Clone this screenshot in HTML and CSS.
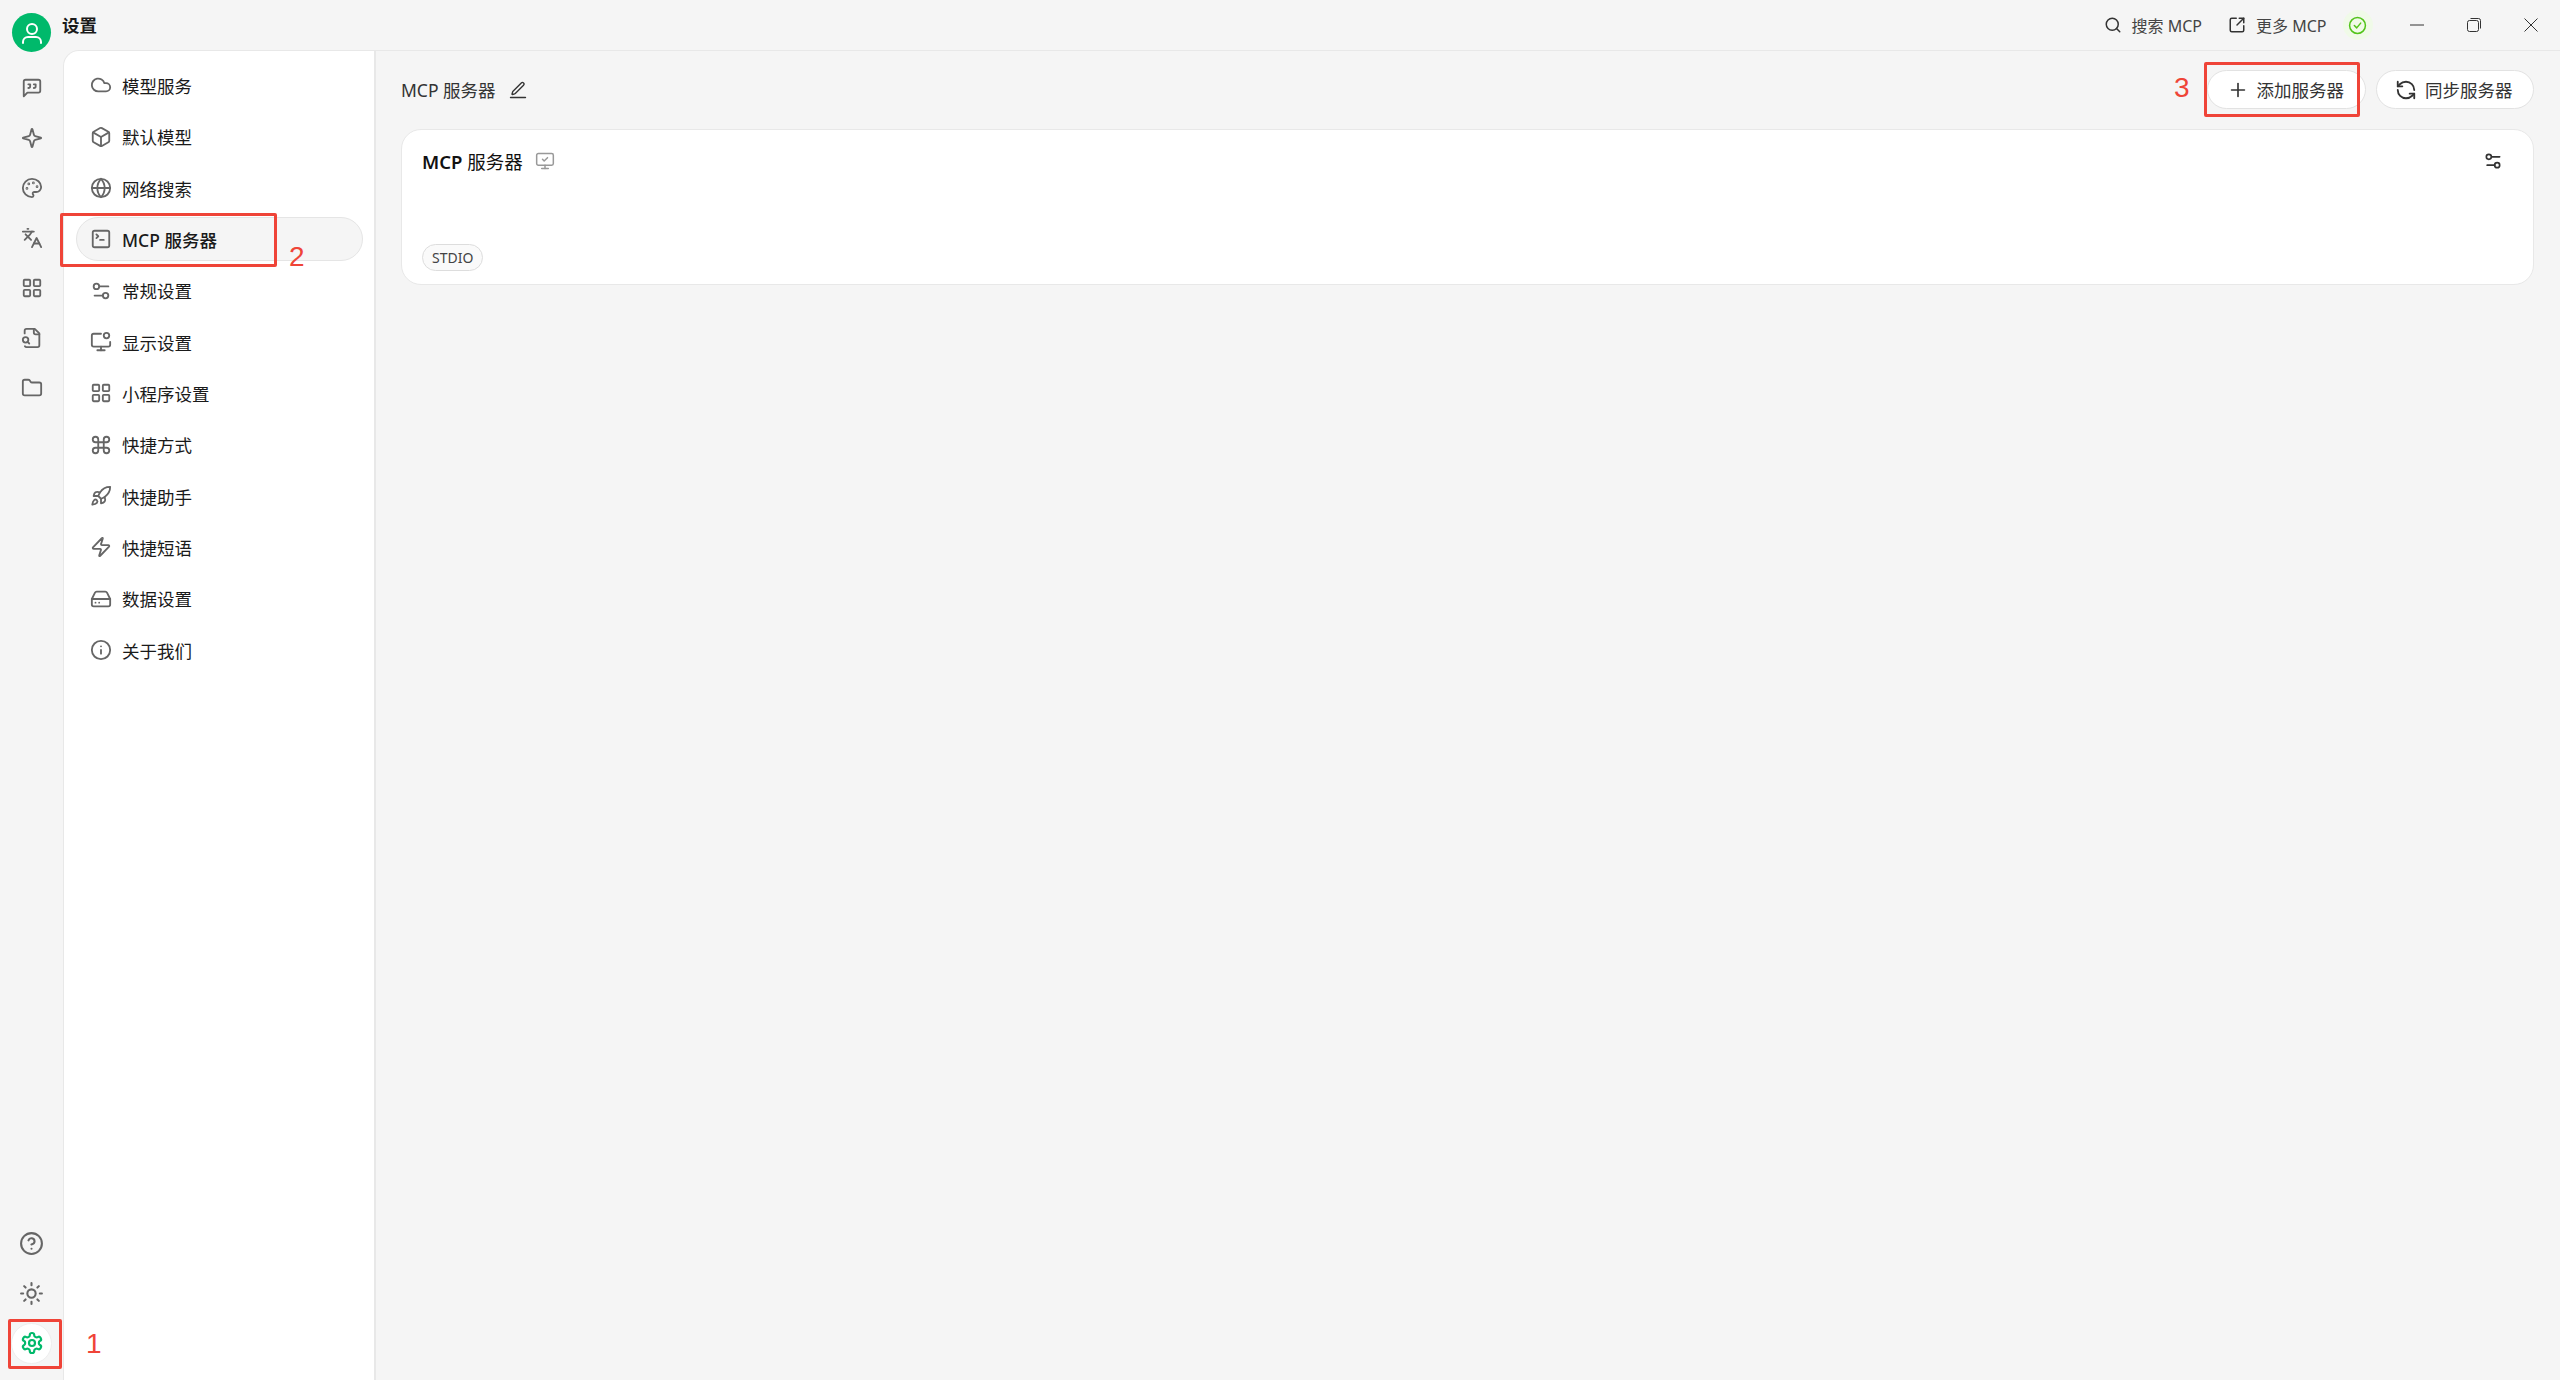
FILE: index.html
```html
<!DOCTYPE html>
<html lang="zh-CN">
<head>
<meta charset="utf-8">
<title>设置</title>
<link rel="stylesheet" href="styles.css">
</head>
<body>
<svg class="sprite" aria-hidden="true">
  <symbol id="i-user" viewBox="0 0 24 24"><circle cx="12" cy="8" r="5"/><path d="M3 22v-1a5 5 0 0 1 5-5h8a5 5 0 0 1 5 5v1"/></symbol>
  <symbol id="i-quote" viewBox="0 0 24 24"><path d="M21 15a2 2 0 0 1-2 2H7l-4 4V5a2 2 0 0 1 2-2h14a2 2 0 0 1 2 2z"/><path d="M8 12a2 2 0 0 0 2-2V8H8"/><path d="M14 12a2 2 0 0 0 2-2V8h-2"/></symbol>
  <symbol id="i-sparkle" viewBox="0 0 24 24"><path d="M9.937 15.5A2 2 0 0 0 8.5 14.063l-6.135-1.582a.5.5 0 0 1 0-.962L8.5 9.936A2 2 0 0 0 9.937 8.5l1.582-6.135a.5.5 0 0 1 .963 0L14.063 8.5A2 2 0 0 0 15.5 9.937l6.135 1.581a.5.5 0 0 1 0 .964L15.5 14.063a2 2 0 0 0-1.437 1.437l-1.582 6.135a.5.5 0 0 1-.963 0z"/></symbol>
  <symbol id="i-palette" viewBox="0 0 24 24"><circle cx="13.5" cy="6.5" r=".5"/><circle cx="17.5" cy="10.5" r=".5"/><circle cx="8.5" cy="7.5" r=".5"/><circle cx="6.5" cy="12.5" r=".5"/><path d="M12 2C6.5 2 2 6.5 2 12s4.5 10 10 10c.926 0 1.648-.746 1.648-1.688 0-.437-.18-.835-.437-1.125-.29-.289-.438-.652-.438-1.125a1.64 1.64 0 0 1 1.668-1.668h1.996c3.051 0 5.555-2.503 5.555-5.554C21.965 6.012 17.461 2 12 2z"/></symbol>
  <symbol id="i-lang" viewBox="0 0 24 24"><path d="m5 8 6 6"/><path d="m4 14 6-6 2-3"/><path d="M2 5h12"/><path d="M7 2h1"/><path d="m22 22-5-10-5 10"/><path d="M14 18h6"/></symbol>
  <symbol id="i-grid" viewBox="0 0 24 24"><rect x="3" y="3" width="7" height="7" rx="1"/><rect x="14" y="3" width="7" height="7" rx="1"/><rect x="14" y="14" width="7" height="7" rx="1"/><rect x="3" y="14" width="7" height="7" rx="1"/></symbol>
  <symbol id="i-filesearch" viewBox="0 0 24 24"><path d="M14 2v4a2 2 0 0 0 2 2h4"/><path d="M4.268 21a2 2 0 0 0 1.727 1H18a2 2 0 0 0 2-2V7l-5-5H6a2 2 0 0 0-2 2v3"/><path d="m9 18-1.5-1.5"/><circle cx="5" cy="14" r="3"/></symbol>
  <symbol id="i-folder" viewBox="0 0 24 24"><path d="M20 20a2 2 0 0 0 2-2V8a2 2 0 0 0-2-2h-7.9a2 2 0 0 1-1.69-.9L9.6 3.9A2 2 0 0 0 7.93 3H4a2 2 0 0 0-2 2v13a2 2 0 0 0 2 2Z"/></symbol>
  <symbol id="i-help" viewBox="0 0 24 24"><circle cx="12" cy="12" r="10"/><path d="M9.09 9a3 3 0 0 1 5.83 1c0 2-3 3-3 3"/><path d="M12 17h.01"/></symbol>
  <symbol id="i-sun" viewBox="0 0 24 24"><circle cx="12" cy="12" r="4"/><path d="M12 2v2"/><path d="M12 20v2"/><path d="m4.93 4.93 1.41 1.41"/><path d="m17.66 17.66 1.41 1.41"/><path d="M2 12h2"/><path d="M20 12h2"/><path d="m6.34 17.66-1.41 1.41"/><path d="m19.07 4.93-1.41 1.41"/></symbol>
  <symbol id="i-gear" viewBox="0 0 24 24"><path d="M12.22 2h-.44a2 2 0 0 0-2 2v.18a2 2 0 0 1-1 1.73l-.43.25a2 2 0 0 1-2 0l-.15-.08a2 2 0 0 0-2.73.73l-.22.38a2 2 0 0 0 .73 2.73l.15.1a2 2 0 0 1 1 1.72v.51a2 2 0 0 1-1 1.74l-.15.09a2 2 0 0 0-.73 2.73l.22.38a2 2 0 0 0 2.73.73l.15-.08a2 2 0 0 1 2 0l.43.25a2 2 0 0 1 1 1.73V20a2 2 0 0 0 2 2h.44a2 2 0 0 0 2-2v-.18a2 2 0 0 1 1-1.73l.43-.25a2 2 0 0 1 2 0l.15.08a2 2 0 0 0 2.73-.73l.22-.39a2 2 0 0 0-.73-2.73l-.15-.08a2 2 0 0 1-1-1.74v-.5a2 2 0 0 1 1-1.74l.15-.09a2 2 0 0 0 .73-2.73l-.22-.38a2 2 0 0 0-2.73-.73l-.15.08a2 2 0 0 1-2 0l-.43-.25a2 2 0 0 1-1-1.73V4a2 2 0 0 0-2-2z"/><circle cx="12" cy="12" r="3"/></symbol>
  <symbol id="i-cloud" viewBox="0 0 24 24"><path d="M17.5 19H9a7 7 0 1 1 6.71-9h1.79a4.5 4.5 0 1 1 0 9Z"/></symbol>
  <symbol id="i-box" viewBox="0 0 24 24"><path d="M21 8a2 2 0 0 0-1-1.73l-7-4a2 2 0 0 0-2 0l-7 4A2 2 0 0 0 3 8v8a2 2 0 0 0 1 1.73l7 4a2 2 0 0 0 2 0l7-4A2 2 0 0 0 21 16Z"/><path d="m3.3 7 8.7 5 8.7-5"/><path d="M12 22V12"/></symbol>
  <symbol id="i-globe" viewBox="0 0 24 24"><circle cx="12" cy="12" r="10"/><path d="M12 2a14.5 14.5 0 0 0 0 20 14.5 14.5 0 0 0 0-20"/><path d="M2 12h20"/></symbol>
  <symbol id="i-terminal" viewBox="0 0 24 24"><path d="m7 11 2-2-2-2"/><path d="M11 13h4"/><rect x="3" y="3" width="18" height="18" rx="2"/></symbol>
  <symbol id="i-sliders" viewBox="0 0 24 24"><path d="M20 7h-9"/><path d="M14 17H5"/><circle cx="17" cy="17" r="3"/><circle cx="7" cy="7" r="3"/></symbol>
  <symbol id="i-monitorcog" viewBox="0 0 24 24"><path d="M12 17v4"/><path d="M8 21h8"/><path d="M12 3H4a2 2 0 0 0-2 2v10a2 2 0 0 0 2 2h16a2 2 0 0 0 2-2v-3"/><circle cx="18" cy="5" r="3"/></symbol>
  <symbol id="i-command" viewBox="0 0 24 24"><path d="M15 6v12a3 3 0 1 0 3-3H6a3 3 0 1 0 3 3V6a3 3 0 1 0-3 3h12a3 3 0 1 0-3-3"/></symbol>
  <symbol id="i-rocket" viewBox="0 0 24 24"><path d="M4.5 16.5c-1.5 1.26-2 5-2 5s3.74-.5 5-2c.71-.84.7-2.13-.09-2.91a2.18 2.18 0 0 0-2.91-.09z"/><path d="m12 15-3-3a22 22 0 0 1 2-3.95A12.88 12.88 0 0 1 22 2c0 2.72-.78 7.5-6 11a22.35 22.35 0 0 1-4 2z"/><path d="M9 12H4s.55-3.03 2-4c1.62-1.08 5 0 5 0"/><path d="M12 15v5s3.03-.55 4-2c1.08-1.62 0-5 0-5"/></symbol>
  <symbol id="i-zap" viewBox="0 0 24 24"><path d="M4 14a1 1 0 0 1-.78-1.63l9.9-10.2a.5.5 0 0 1 .86.46l-1.92 6.02A1 1 0 0 0 13 10h7a1 1 0 0 1 .78 1.63l-9.9 10.2a.5.5 0 0 1-.86-.46l1.92-6.02A1 1 0 0 0 11 14z"/></symbol>
  <symbol id="i-drive" viewBox="0 0 24 24"><path d="M22 12H2"/><path d="M5.45 5.11 2 12v6a2 2 0 0 0 2 2h16a2 2 0 0 0 2-2v-6l-3.45-6.89A2 2 0 0 0 16.76 4H7.24a2 2 0 0 0-1.79 1.11z"/><path d="M6 16h.01"/><path d="M10 16h.01"/></symbol>
  <symbol id="i-info" viewBox="0 0 24 24"><circle cx="12" cy="12" r="10"/><path d="M12 16v-4"/><path d="M12 8h.01"/></symbol>
  <symbol id="i-search" viewBox="0 0 24 24"><circle cx="11" cy="11" r="8"/><path d="m21 21-4.3-4.3"/></symbol>
  <symbol id="i-external" viewBox="0 0 24 24"><path d="M21 13v6a2 2 0 0 1-2 2H5a2 2 0 0 1-2-2V5a2 2 0 0 1 2-2h6"/><path d="m21 3-9 9"/><path d="M15 3h6v6"/></symbol>
  <symbol id="i-check" viewBox="0 0 24 24"><circle cx="12" cy="12" r="10"/><path d="m8 12 3 3 5-6"/></symbol>
  <symbol id="i-pencil" viewBox="0 0 24 24"><path d="M2 22h20"/><path d="M16.376 2.622a1 1 0 0 1 3.002 3.002L8.368 16.635a2 2 0 0 1-.855.506l-2.872.838a.5.5 0 0 1-.62-.62l.838-2.872a2 2 0 0 1 .506-.854z"/></symbol>
  <symbol id="i-plus" viewBox="0 0 24 24"><path d="M5 12h14"/><path d="M12 5v14"/></symbol>
  <symbol id="i-refresh" viewBox="0 0 24 24"><path d="M21 12a9 9 0 0 0-9-9 9.75 9.75 0 0 0-6.74 2.74L3 8"/><path d="M3 3v5h5"/><path d="M3 12a9 9 0 0 0 9 9 9.75 9.75 0 0 0 6.74-2.74L21 16"/><path d="M16 16h5v5"/></symbol>
  <symbol id="i-monitorcheck" viewBox="0 0 24 24"><path d="m9 10 2 2 4-4"/><rect x="2" y="3" width="20" height="14" rx="2"/><path d="M12 17v4"/><path d="M8 21h8"/></symbol>
  <symbol id="i-min" viewBox="0 0 14 14"><path d="M0 7h14"/></symbol>
  <symbol id="i-restore" viewBox="0 0 14 14"><rect x=".5" y="2.5" width="11" height="11" rx="2"/><path d="M3.5.5h8a2 2 0 0 1 2 2v8"/></symbol>
  <symbol id="i-close" viewBox="0 0 14 14"><path d="m.5.5 13 13"/><path d="m13.5.5-13 13"/></symbol>
</svg>

<div class="app">
  <header class="titlebar">
    <div class="avatar"><svg class="avatar-icon"><use href="#i-user"/></svg></div>
    <div class="app-title">设置</div>
    <div class="title-actions">
      <a class="title-link"><svg class="icon icon-sm"><use href="#i-search"/></svg><span>搜索 MCP</span></a>
      <a class="title-link"><svg class="icon icon-sm"><use href="#i-external"/></svg><span>更多 MCP</span></a>
      <span class="status"><svg class="status-icon"><use href="#i-check"/></svg></span>
    </div>
    <div class="window-controls">
      <svg class="win"><use href="#i-min"/></svg>
      <svg class="win"><use href="#i-restore"/></svg>
      <svg class="win"><use href="#i-close"/></svg>
    </div>
  </header>

  <div class="body">
    <aside class="rail">
      <div class="rail-group">
        <span class="rail-btn"><svg class="icon"><use href="#i-quote"/></svg></span>
        <span class="rail-btn"><svg class="icon"><use href="#i-sparkle"/></svg></span>
        <span class="rail-btn"><svg class="icon"><use href="#i-palette"/></svg></span>
        <span class="rail-btn"><svg class="icon"><use href="#i-lang"/></svg></span>
        <span class="rail-btn"><svg class="icon"><use href="#i-grid"/></svg></span>
        <span class="rail-btn"><svg class="icon"><use href="#i-filesearch"/></svg></span>
        <span class="rail-btn"><svg class="icon"><use href="#i-folder"/></svg></span>
      </div>
      <div class="rail-group">
        <span class="rail-btn"><svg class="icon icon-lg"><use href="#i-help"/></svg></span>
        <span class="rail-btn"><svg class="icon icon-lg"><use href="#i-sun"/></svg></span>
        <span class="rail-btn"><span class="rail-active"><svg class="icon icon-green"><use href="#i-gear"/></svg></span></span>
      </div>
    </aside>

    <nav class="settings-nav">
      <a class="nav-item"><svg class="icon"><use href="#i-cloud"/></svg><span>模型服务</span></a>
      <a class="nav-item"><svg class="icon"><use href="#i-box"/></svg><span>默认模型</span></a>
      <a class="nav-item"><svg class="icon"><use href="#i-globe"/></svg><span>网络搜索</span></a>
      <a class="nav-item nav-active"><svg class="icon"><use href="#i-terminal"/></svg><span>MCP 服务器</span></a>
      <a class="nav-item"><svg class="icon"><use href="#i-sliders"/></svg><span>常规设置</span></a>
      <a class="nav-item"><svg class="icon"><use href="#i-monitorcog"/></svg><span>显示设置</span></a>
      <a class="nav-item"><svg class="icon"><use href="#i-grid"/></svg><span>小程序设置</span></a>
      <a class="nav-item"><svg class="icon"><use href="#i-command"/></svg><span>快捷方式</span></a>
      <a class="nav-item"><svg class="icon"><use href="#i-rocket"/></svg><span>快捷助手</span></a>
      <a class="nav-item"><svg class="icon"><use href="#i-zap"/></svg><span>快捷短语</span></a>
      <a class="nav-item"><svg class="icon"><use href="#i-drive"/></svg><span>数据设置</span></a>
      <a class="nav-item"><svg class="icon"><use href="#i-info"/></svg><span>关于我们</span></a>
    </nav>

    <main class="content">
      <div class="content-head">
        <div class="content-title"><span>MCP 服务器</span><svg class="icon icon-pencil"><use href="#i-pencil"/></svg></div>
        <div class="content-buttons">
          <button class="pill"><svg class="icon icon-dark icon-thin"><use href="#i-plus"/></svg><span>添加服务器</span></button>
          <button class="pill"><svg class="icon icon-dark"><use href="#i-refresh"/></svg><span>同步服务器</span></button>
        </div>
      </div>
      <section class="card">
        <div class="card-top">
          <div class="card-title"><strong>MCP</strong> 服务器<svg class="icon icon-monitor"><use href="#i-monitorcheck"/></svg></div>
          <svg class="icon icon-dark icon-md"><use href="#i-sliders"/></svg>
        </div>
        <div class="card-tags"><span class="tag">STDIO</span></div>
      </section>
    </main>
  </div>
</div>

<div class="mark mark-1"></div>
<div class="mark mark-2"></div>
<div class="mark mark-3"></div>
<span class="mark-num num-1">1</span>
<span class="mark-num num-2">2</span>
<span class="mark-num num-3">3</span>
</body>
</html>
```

FILE: styles.css
```css
* { box-sizing: border-box; }
html, body { margin: 0; height: 100%; overflow: hidden; }
body {
  font-family: "Noto Sans", "Noto Sans CJK SC", sans-serif;
  color: #1a1a1a;
  background: #f5f5f5;
  font-size: 17.5px;
}
.sprite { display: none; }
.icon {
  width: 22px; height: 22px; flex: none;
  fill: none; stroke: #666; stroke-width: 2;
  stroke-linecap: round; stroke-linejoin: round;
}
.icon-sm { width: 18px; height: 18px; stroke: #333; }
.icon-dark { stroke: #333; }
.icon-md { width: 20px; height: 20px; }
.icon-lg { width: 25px; height: 25px; }
.icon-thin { stroke-width: 1.8; }
.icon-green { stroke: #00b96b; width: 24px; height: 24px; stroke-width: 2.2; }

.app { display: flex; flex-direction: column; height: 100vh; }

.titlebar {
  position: relative;
  display: flex; align-items: center;
  height: 50px; flex: none;
}
.avatar {
  position: absolute; left: 12px; top: 13px;
  width: 39px; height: 39px; border-radius: 50%;
  background: #00b96b;
  display: flex; align-items: center; justify-content: center;
  z-index: 2;
}
.avatar-icon { width: 24px; height: 24px; fill: none; stroke: #fff; stroke-width: 2; stroke-linecap: round; }
.app-title { margin-left: 62px; font-weight: 700; font-size: 17.5px; line-height: 50px; }
.title-actions {
  margin-left: auto;
  display: flex; align-items: center;
  font-size: 16px; color: #444;
}
.title-link { display: flex; align-items: center; gap: 10px; margin-right: 26px; white-space: nowrap; }
.title-link:nth-child(2) { margin-right: 16px; }
.status {
  width: 30px; height: 30px; border-radius: 50%;
  background: #f0fae8;
  display: flex; align-items: center; justify-content: center;
}
.status-icon { width: 19px; height: 19px; fill: none; stroke: #52c41a; stroke-width: 1.9; stroke-linecap: round; stroke-linejoin: round; }
.window-controls { display: flex; align-items: center; gap: 43px; margin-left: 37.5px; margin-right: 22px; }
.win { width: 14px; height: 14px; fill: none; stroke: #333; stroke-width: 1; }

.body { flex: 1; display: flex; min-height: 0; }

.rail {
  width: 63px; flex: none;
  display: flex; flex-direction: column; justify-content: space-between;
  padding: 13px 0 12px;
}
.rail-group { display: flex; flex-direction: column; }
.rail-btn { height: 50px; display: flex; align-items: center; justify-content: center; }
.rail-active {
  width: 41px; height: 41px; border-radius: 50%;
  background: #fff; border: 1px solid #eee;
  display: flex; align-items: center; justify-content: center;
}

.settings-nav {
  width: 313px; flex: none;
  background: #fff;
  border-top: 1px solid #e8e8e8;
  border-left: 1px solid #e8e8e8;
  border-right: 2px solid #e8e8e8;
  border-top-left-radius: 16px;
  padding: 12.4px 11px 0 12px;
  display: flex; flex-direction: column; gap: 7.33px;
}
.nav-item {
  height: 44px; padding: 0 13px;
  display: flex; align-items: center; gap: 10px;
  border: 1px solid transparent; border-radius: 22px;
  white-space: nowrap;
}
.nav-active { background: #f5f5f5; border-color: #e5e5e5; font-weight: 500; }

.content {
  flex: 1; min-width: 0;
  border-top: 1px solid #e8e8e8;
  padding: 19px 26px 0 25px;
}
.content-head { display: flex; align-items: center; justify-content: space-between; height: 39px; }
.content-title { display: flex; align-items: center; gap: 13px; font-size: 17.5px; color: #333; }
.icon-pencil { width: 18px; height: 18px; stroke: #333; stroke-width: 1.8; }
.content-buttons { display: flex; gap: 10px; }
.pill {
  height: 39px; padding: 0 20.5px 0 18.5px;
  display: flex; align-items: center; gap: 8px;
  background: #fff; color: #333;
  border: 1px solid #e2e2e2; border-radius: 20px;
  font: inherit; font-size: 17.5px;
  white-space: nowrap;
}
.card {
  margin-top: 20px; height: 156px;
  background: #fff;
  border: 1px solid #e8e8e8; border-radius: 20px;
  padding: 20px 16px 13px 20px;
  display: flex; flex-direction: column; justify-content: space-between;
}
.card-top { display: flex; align-items: center; justify-content: space-between; height: 22px; padding-right: 14px; }
.card-title { display: flex; align-items: center; font-size: 18.5px; white-space: pre; color: #111; }
.card-title strong { font-weight: 600; }
.icon-monitor { width: 20px; height: 20px; stroke: #999; margin-left: 12px; stroke-width: 1.8; }
.card-tags { display: flex; }
.tag {
  height: 27px; padding: 0 9px;
  display: flex; align-items: center;
  font-size: 14px; color: #444;
  background: #fafafa;
  border: 1px solid #ddd; border-radius: 14px;
}

.mark { position: absolute; border: 3px solid #ef4438; border-radius: 2px; pointer-events: none; }
.mark-1 { left: 8px; top: 1319px; width: 54px; height: 50px; }
.mark-2 { left: 60px; top: 213px; width: 217px; height: 54px; }
.mark-3 { left: 2204px; top: 62px; width: 156px; height: 55px; }
.mark-num {
  position: absolute;
  font-family: "Liberation Sans", sans-serif;
  font-size: 28px; line-height: 30px; color: #ef4438;
}
.num-1 { left: 86px; top: 1329px; }
.num-2 { left: 289px; top: 242px; }
.num-3 { left: 2174px; top: 73px; }
```
